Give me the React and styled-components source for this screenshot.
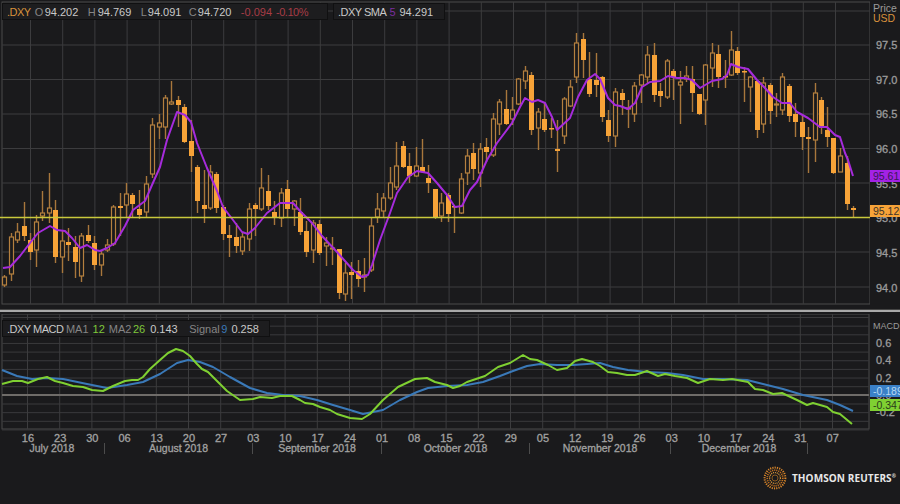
import styled, { createGlobalStyle } from "styled-components";

// x, body top, body bottom, wick top, wick bottom, filled
const candles = [
  [4, 277, 285, 275, 287, 0], [11, 237, 274, 233, 281, 0], [17, 232, 240, 223, 243, 0], [24, 226, 236, 202, 241, 1],
  [30, 240, 252, 233, 260, 1], [36, 222, 250, 215, 267, 0], [42, 213, 216, 191, 221, 0], [49, 208, 213, 173, 223, 0],
  [55, 210, 257, 200, 263, 1], [62, 241, 257, 230, 273, 0], [68, 242, 245, 228, 261, 1], [75, 247, 262, 236, 278, 1],
  [81, 236, 276, 233, 282, 0], [88, 235, 241, 225, 243, 1], [94, 243, 265, 236, 270, 1], [101, 254, 265, 251, 276, 0],
  [107, 245, 250, 239, 252, 0], [113, 207, 244, 205, 246, 0], [120, 206, 208, 193, 236, 1], [126, 194, 205, 183, 218, 0],
  [132, 195, 204, 193, 218, 1], [139, 209, 215, 190, 219, 1], [146, 184, 212, 176, 217, 0], [152, 125, 174, 118, 178, 0],
  [159, 123, 127, 114, 139, 0], [165, 98, 127, 95, 139, 0], [171, 102, 104, 81, 105, 0], [178, 100, 105, 96, 127, 1],
  [184, 107, 142, 104, 143, 1], [191, 141, 156, 120, 172, 1], [197, 167, 201, 165, 213, 1], [204, 205, 209, 170, 223, 1],
  [210, 172, 208, 165, 210, 0], [216, 174, 208, 172, 213, 1], [223, 207, 234, 205, 240, 1], [229, 235, 238, 225, 257, 1],
  [236, 237, 246, 223, 253, 1], [242, 237, 251, 233, 255, 0], [249, 209, 239, 203, 251, 0], [255, 205, 209, 203, 236, 1],
  [261, 188, 209, 168, 211, 0], [268, 191, 206, 175, 210, 1], [274, 212, 217, 201, 225, 1], [281, 193, 218, 188, 227, 0],
  [287, 189, 209, 180, 218, 1], [294, 201, 209, 200, 226, 0], [300, 212, 232, 198, 235, 1], [306, 231, 252, 221, 257, 1],
  [313, 223, 250, 220, 263, 0], [319, 224, 253, 220, 255, 1], [326, 243, 246, 237, 266, 0], [332, 248, 249, 237, 265, 0],
  [339, 249, 293, 249, 299, 1], [345, 273, 294, 263, 301, 0], [351, 272, 275, 262, 299, 1], [358, 271, 279, 260, 287, 1],
  [364, 275, 277, 258, 292, 0], [371, 226, 270, 218, 272, 0], [377, 209, 217, 193, 223, 0], [383, 198, 211, 193, 217, 0],
  [390, 183, 198, 167, 200, 0], [396, 166, 187, 142, 190, 0], [403, 146, 167, 141, 168, 1], [409, 166, 176, 153, 183, 1],
  [416, 166, 176, 147, 177, 0], [422, 167, 172, 139, 173, 1], [428, 178, 183, 165, 193, 1], [435, 189, 217, 189, 219, 1],
  [441, 203, 216, 193, 222, 0], [448, 195, 214, 193, 222, 1], [454, 206, 207, 207, 233, 1], [461, 179, 213, 173, 214, 0],
  [467, 156, 173, 149, 185, 0], [473, 153, 169, 143, 180, 1], [480, 149, 173, 143, 187, 0], [486, 147, 152, 138, 162, 1],
  [493, 119, 155, 113, 157, 0], [499, 102, 124, 99, 135, 0], [506, 109, 124, 90, 125, 1], [512, 110, 119, 97, 125, 0],
  [518, 79, 104, 78, 105, 0], [525, 71, 81, 66, 89, 0], [531, 75, 130, 72, 135, 1], [538, 112, 128, 108, 150, 0],
  [544, 119, 130, 103, 132, 1], [551, 128, 129, 118, 138, 1], [557, 149, 151, 120, 172, 1], [564, 99, 136, 97, 144, 0],
  [570, 87, 106, 80, 107, 0], [576, 43, 77, 33, 83, 0], [583, 39, 60, 33, 78, 1], [589, 79, 94, 52, 97, 1],
  [596, 80, 85, 53, 97, 1], [602, 77, 117, 76, 122, 1], [608, 120, 136, 110, 142, 1], [615, 92, 136, 88, 147, 0],
  [622, 93, 100, 89, 115, 1], [628, 108, 109, 100, 128, 0], [634, 86, 114, 82, 122, 0], [641, 75, 85, 74, 103, 0],
  [647, 55, 77, 46, 83, 0], [654, 55, 95, 43, 102, 1], [660, 91, 96, 83, 107, 1], [667, 61, 97, 59, 99, 0],
  [673, 71, 77, 69, 100, 1], [680, 82, 85, 71, 124, 0], [686, 76, 79, 66, 82, 0], [692, 79, 93, 66, 112, 1],
  [699, 94, 114, 94, 115, 1], [705, 65, 100, 64, 125, 0], [712, 53, 68, 43, 87, 0], [718, 54, 77, 45, 88, 1],
  [725, 76, 77, 60, 88, 1], [731, 50, 75, 31, 76, 0], [737, 51, 73, 47, 75, 1], [744, 71, 72, 67, 102, 1],
  [750, 77, 87, 76, 112, 0], [757, 81, 130, 80, 138, 1], [763, 83, 124, 77, 133, 0], [770, 85, 111, 83, 124, 1],
  [776, 104, 105, 93, 117, 0], [782, 77, 110, 73, 115, 0], [789, 86, 116, 84, 122, 1], [795, 114, 122, 103, 137, 1],
  [802, 122, 137, 115, 150, 1], [808, 137, 139, 127, 173, 1], [815, 93, 140, 83, 162, 0], [821, 100, 128, 97, 134, 1],
  [827, 130, 137, 107, 147, 1], [833, 138, 173, 138, 174, 1], [840, 156, 172, 148, 172, 0], [847, 163, 204, 156, 210, 1],
  [853, 208, 210, 206, 217, 1],
];

const sma = "3,268 10,267 20,256 30,243 38,233 50,226 57,230 65,231 72,238 80,248 87,245 95,250 100,251 107,248 115,243 125,226 133,210 145,201 152,185 160,167 167,140 177,112 185,115 191,122 197,143 207,168 217,191 223,207 233,220 242,232 248,234 255,228 267,213 280,203 293,203 300,211 312,223 322,236 337,252 353,270 362,277 368,275 372,265 380,240 390,213 397,193 408,177 417,171 428,173 437,183 447,195 455,207 462,206 470,190 477,182 487,160 497,143 512,123 520,107 525,98 532,102 538,100 545,103 552,117 557,130 570,118 578,97 587,80 595,74 600,79 608,98 615,105 620,106 628,109 635,103 642,87 650,82 660,81 668,76 677,78 685,78 692,80 700,88 712,81 722,79 727,75 731,64 738,67 748,69 757,80 765,88 773,97 782,103 790,103 797,112 808,118 820,127 827,127 835,135 840,137 845,153 848,160 853,176";
const ma = "2,383 13,380 22,380 28,382 38,378 47,376 55,380 63,382 73,385 83,386 92,389 103,390 113,385 125,380 132,379 138,379 143,376 150,368 160,359 168,352 176,348 183,350 190,355 197,363 202,368 208,371 217,380 227,390 240,399 253,398 260,396 272,397 280,395 292,395 300,399 305,402 313,403 320,406 330,409 337,413 350,417 362,418 370,413 383,399 398,386 415,378 427,377 435,381 447,384 453,387 460,385 467,381 473,379 485,375 498,366 510,362 523,354 530,358 537,359 548,364 557,369 567,367 575,360 582,358 593,361 600,365 608,371 617,372 627,374 635,374 647,370 658,375 665,373 675,375 687,377 698,382 710,378 723,379 732,378 748,381 755,388 763,389 773,393 782,392 797,399 807,404 813,402 827,406 833,411 840,413 852,423";
const signal = "2,369 17,375 32,378 47,377 63,378 87,383 107,387 127,384 143,381 160,373 177,362 188,359 200,361 213,366 230,376 250,387 267,392 283,394 300,395 317,399 333,404 350,409 363,413 383,409 400,399 417,391 428,387 447,385 467,384 483,381 500,375 513,370 527,365 540,363 557,364 573,364 587,363 600,362 613,366 628,369 647,371 667,372 683,374 703,378 723,378 747,379 763,383 783,388 803,394 827,399 840,404 853,410";

const priceTicks = ["97.5", "97.0", "96.5", "96.0", "95.5", "95.0", "94.5", "94.0"];
const priceRows = [11, 45, 79.5, 114, 148.5, 183, 252, 287];
const macdTicks = ["0.6", "0.4", "0.2", "0.0", "-0.2"];
const macdRows = Array.from({ length: 14 }, (_, i) => 316.5 + i * 8.65);
const dates = ["16", "23", "30", "06", "13", "20", "27", "03", "10", "17", "24", "01", "08", "15", "22", "29", "05", "12", "19", "26", "03", "10", "17", "24", "31", "07"];
const months = [
  ["July 2018", 105],
  ["August 2018", 148],
  ["September 2018", 129],
  ["October 2018", 148],
  ["November 2018", 141],
  ["December 2018", 137],
];
const columns = dates.map((_, i) => i);

const GlobalStyle = createGlobalStyle`
  html, body {
    margin: 0;
    background: #1a1a1c;
  }
`;

const Page = styled.div`
  width: 900px;
  height: 504px;
  overflow: hidden;
  background: #1a1a1c;
  color: #9a9a9a;
  font-family: "Liberation Sans", Arial, sans-serif;
`;

const Pane = styled.section`
  display: flex;
  height: ${(p) => p.$height}px;
`;

const Plot = styled.div`
  position: relative;
  width: 870px;
  flex: none;

  svg {
    display: block;
    filter: blur(0.35px);
  }
`;

const Axis = styled.div`
  position: relative;
  flex: 1;
  overflow: hidden;
  display: flex;
  flex-direction: column;
  padding-left: 6px;
`;

const AxisHead = styled.div`
  box-sizing: border-box;
  height: ${(p) => p.$height}px;
  flex: none;
  padding-top: ${(p) => p.$top}px;
  margin-left: -3px;
  font-size: ${(p) => p.$size}px;
  line-height: 10px;
  white-space: nowrap;

  b {
    display: block;
    font-weight: 400;
    color: #d8923c;
  }
`;

const Tick = styled.div`
  height: ${(p) => p.$height}px;
  flex: none;
  display: flex;
  align-items: center;
  font-size: 11px;
  color: #9c9c9c;
  -webkit-text-stroke: 0.3px #9c9c9c;
`;

const Tag = styled.div`
  position: absolute;
  left: 0;
  top: ${(p) => p.$top}px;
  width: 30px;
  height: 12px;
  padding-left: 3px;
  box-sizing: border-box;
  background: ${(p) => p.$bg};
  color: ${(p) => p.$color};
  font-size: 10.5px;
  line-height: 12px;
  white-space: nowrap;
`;

const Legend = styled.div`
  position: absolute;
  top: ${(p) => p.$top}px;
  left: ${(p) => p.$left}px;
  width: ${(p) => p.$width}px;
  height: 17px;
  box-sizing: border-box;
  display: flex;
  align-items: center;
  padding-left: ${(p) => p.$pad}px;
  background: #1d1d1f;
  border: 1px solid #101011;
  font-size: 11px;
  white-space: nowrap;
`;

const Item = styled.span`
  color: ${(p) => p.$color || "#c9c9c9"};
  margin-left: ${(p) => p.$gap || 0}px;
  letter-spacing: ${(p) => (p.$tight ? "-0.5px" : "0")};
`;

const Divider = styled.div`
  height: 2px;
  margin: 5px 0 2px;
  background: #a9a9a9;
  box-shadow: 0 -1px 0 #444;
`;

const DateRow = styled.div`
  display: flex;
  margin-top: 1px;
  padding-left: 11.9px;
  height: 11px;
`;

const DateCell = styled.span`
  width: 32.2px;
  flex: none;
  text-align: center;
  font-size: 11px;
  line-height: 12px;
  color: #a2a2a2;
  -webkit-text-stroke: 0.3px #a2a2a2;
`;

const MonthRow = styled.div`
  display: flex;
  height: 11px;
`;

const MonthCell = styled.span`
  width: ${(p) => p.$width}px;
  flex: none;
  box-sizing: border-box;
  text-align: center;
  font-size: 10.5px;
  line-height: 11px;
  color: #a2a2a2;
  -webkit-text-stroke: 0.3px #a2a2a2;
  border-right: 1px solid #4c4c4c;
`;

const Footer = styled.footer`
  display: flex;
  justify-content: flex-end;
  align-items: center;
  gap: 5px;
  margin-top: 12px;
  padding-right: 4px;
  height: 24px;
`;

const Brand = styled.span`
  font-family: "Open Sans", "Liberation Sans", sans-serif;
  font-size: 10px;
  font-weight: 700;
  letter-spacing: 0.1px;
  color: #e8e8e8;

  sup {
    font-size: 5px;
    vertical-align: 4px;
  }
`;

const Candle = ({ c }) => {
  const [x, top, bottom, wickTop, wickBottom, filled] = c;
  return (
    <g>
      <line x1={x + 0.5} x2={x + 0.5} y1={wickTop} y2={wickBottom} stroke="#a8773c" strokeWidth="1.4" />
      {filled ? (
        <rect x={x - 2} y={top} width="5" height={Math.max(bottom - top, 1.5)} fill="#f7a338" />
      ) : (
        <rect x={x - 1.5} y={top} width="4" height={bottom - top} fill="#1a1a1c" stroke="#b5803f" strokeWidth="1.2" />
      )}
    </g>
  );
};

const Logo = () => (
  <svg width="24" height="24" viewBox="0 0 24 24">
    <circle cx="12" cy="12" r="10.4" fill="none" stroke="#d9862a" strokeWidth="2" strokeDasharray="1.2 1.1" />
    <circle cx="12" cy="12" r="7.8" fill="none" stroke="#c9741f" strokeWidth="1.7" strokeDasharray="1.1 1" />
    <circle cx="12" cy="12" r="5.4" fill="none" stroke="#e29a3a" strokeWidth="1.3" strokeDasharray="1 0.9" />
    <circle cx="12" cy="12" r="3" fill="none" stroke="#8a5a20" strokeWidth="1" />
  </svg>
);

const App = () => {
  return (
    <Page>
      <GlobalStyle />
      <Pane $height={305}>
        <Plot>
          <svg width="870" height="305" viewBox="0 0 870 305">
            <rect x="2" y="2" width="868" height="302" fill="none" stroke="#4a4a4a" />
            {priceRows.map((y) => (
              <line key={y} x1="2" x2="870" y1={y} y2={y} stroke="#3c3c3e" />
            ))}
            {columns.map((i) => (
              <line key={i} x1={30.5 + i * 32.2} x2={30.5 + i * 32.2} y1="2" y2="304" stroke="#3c3c3e" />
            ))}
            {candles.map((c) => (
              <Candle key={c[0]} c={c} />
            ))}
            <polyline points={sma} fill="none" stroke="#a62bdc" strokeWidth="2" strokeLinejoin="round" />
            <line x1="0" x2="870" y1="217.5" y2="217.5" stroke="#c9c93c" strokeWidth="1.4" />
          </svg>
          <Legend $top={3} $left={2} $width={326} $pad={4}>
            <Item $color="#d8923c" $tight>.DXY</Item>
            <Item $color="#858585" $gap={4}>O</Item>
            <Item $gap={1.4}>94.202</Item>
            <Item $color="#858585" $gap={9.4}>H</Item>
            <Item $gap={2}>94.769</Item>
            <Item $color="#858585" $gap={9.4}>L</Item>
            <Item $gap={1}>94.091</Item>
            <Item $color="#858585" $gap={7.4}>C</Item>
            <Item $gap={1}>94.720</Item>
            <Item $color="#a83c46" $gap={9.4}>-0.094</Item>
            <Item $color="#a83c46" $gap={4} $tight>-0.10%</Item>
          </Legend>
          <Legend $top={3} $left={333} $width={112} $pad={4}>
            <Item $tight>.DXY SMA</Item>
            <Item $color="#7b2ea0" $gap={3}>5</Item>
            <Item $gap={4}>94.291</Item>
          </Legend>
        </Plot>
        <Axis>
          <AxisHead $height={27.6} $top={3} $size={10.5}>
            Price
            <b>USD</b>
          </AxisHead>
          {priceTicks.map((t) => (
            <Tick key={t} $height={34.7}>{t}</Tick>
          ))}
          <Tag $top={170} $bg="#a322e6" $color="#3a1a55">95.61</Tag>
          <Tag $top={204.5} $bg="#f7a338" $color="#3d3328">95.126</Tag>
        </Axis>
      </Pane>
      <Divider />
      <Pane $height={117}>
        <Plot>
          <svg width="870" height="117" viewBox="0 313 870 117">
            <rect x="2" y="313" width="867" height="115" fill="none" stroke="#4a4a4a" />
            {macdRows.map((y) => (
              <line key={y} x1="2" x2="869" y1={y} y2={y} stroke="#3a3a3c" />
            ))}
            {columns.map((i) => (
              <line key={i} x1={27.5 + i * 32.2} x2={27.5 + i * 32.2} y1="313" y2="428" stroke="#3c3c3e" />
            ))}
            <line x1="2" x2="869" y1="394" y2="394" stroke="#6f6c69" strokeWidth="2" />
            <polyline points={signal} fill="none" stroke="#3a79b8" strokeWidth="2" strokeLinejoin="round" />
            <polyline points={ma} fill="none" stroke="#7fd032" strokeWidth="2" strokeLinejoin="round" />
          </svg>
          <Legend $top={6} $left={2} $width={268} $pad={4}>
            <Item $tight>.DXY MACD</Item>
            <Item $color="#858585" $gap={2.5}>MA1</Item>
            <Item $color="#7fc83a" $gap={4}>12</Item>
            <Item $color="#858585" $gap={4}>MA2</Item>
            <Item $color="#7fc83a" $gap={1.5}>26</Item>
            <Item $gap={5}>0.143</Item>
            <Item $color="#858585" $gap={11.5}>Signal</Item>
            <Item $color="#3a79b8" $gap={1.5}>9</Item>
            <Item $gap={4}>0.258</Item>
          </Legend>
        </Plot>
        <Axis>
          <AxisHead $height={20.35} $top={7} $size={9}>MACD</AxisHead>
          {macdTicks.map((t) => (
            <Tick key={t} $height={17.3}>{t}</Tick>
          ))}
          <Tag $top={71} $bg="#3a80c8" $color="#b8d8f0">-0.189</Tag>
          <Tag $top={85} $bg="#7fd032" $color="#2a3a1a">-0.347</Tag>
        </Axis>
      </Pane>
      <DateRow>
        {dates.map((d, i) => (
          <DateCell key={i}>{d}</DateCell>
        ))}
      </DateRow>
      <MonthRow>
        {months.map(([label, width]) => (
          <MonthCell key={label} $width={width}>{label}</MonthCell>
        ))}
      </MonthRow>
      <Footer>
        <Logo />
        <Brand>THOMSON REUTERS<sup>®</sup></Brand>
      </Footer>
    </Page>
  );
};

export default App;
